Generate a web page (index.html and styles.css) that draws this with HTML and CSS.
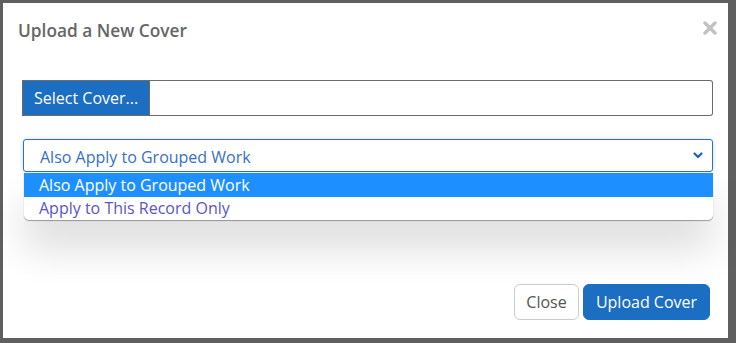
FILE: index.html
```html
<!DOCTYPE html>
<html>
<head>
<meta charset="utf-8">
<link rel="stylesheet" href="styles.css">
</head>
<body>
<div class="modal">
  <div class="modal-header">
    <h4 class="modal-title">Upload a New Cover</h4>
    <svg class="close" width="14" height="14" viewBox="0 0 14 14" aria-label="Close"><path d="M2 2 L12 12 M12 2 L2 12" stroke="#c2c2c2" stroke-width="3.4" stroke-linecap="round"/></svg>
  </div>
  <div class="modal-body">
    <div class="file-group">
      <span class="file-btn">Select Cover...</span>
      <span class="file-name"></span>
    </div>
    <div class="select-wrap">
      <div class="select">
        <span class="select-text">Also Apply to Grouped Work</span>
        <svg class="chevron" width="10" height="7" viewBox="0 0 10 7"><polyline points="1.5,1.5 5,5 8.5,1.5" fill="none" stroke="#1b63c6" stroke-width="2.2" stroke-linecap="round" stroke-linejoin="round"/></svg>
      </div>
      <div class="dropdown">
        <div class="option selected">Also Apply to Grouped Work</div>
        <div class="option">Apply to This Record Only</div>
      </div>
    </div>
  </div>
  <div class="modal-footer">
    <span class="btn btn-default">Close</span>
    <span class="btn btn-primary">Upload Cover</span>
  </div>
</div>
</body>
</html>
```
FILE: styles.css
```css
html, body {
  margin: 0;
  padding: 0;
}
body {
  width: 736px;
  height: 343px;
  background: #5f5f5f;
  font-family: "Open Sans", "Noto Sans", sans-serif;
  overflow: hidden;
  padding: 3px 0 0 3px;
  box-sizing: border-box;
}
.modal {
  width: 725px;
  height: 335px;
  background: #fff;
  display: flex;
  flex-direction: column;
  box-sizing: border-box;
}
.modal-header {
  display: flex;
  justify-content: space-between;
  align-items: flex-start;
  padding: 15px 11px 0 15px;
  height: 53px;
  box-sizing: border-box;
}
.modal-title {
  margin: 0;
  font-size: 17.3px;
  font-weight: 600;
  line-height: 26px;
  color: #666;
}
.close {
  display: block;
  margin-top: 3px;
}
.modal-body {
  padding: 24px 15px 0 19px;
  height: 209px;
  box-sizing: border-box;
}
.file-group {
  display: flex;
  height: 36px;
}
.file-btn {
  background: #1b6ec2;
  color: #fff;
  border: 1px solid #6b6b6b;
  font-size: 16px;
  line-height: 34px;
  padding: 0 11px;
  width: 128px;
  box-sizing: border-box;
  white-space: nowrap;
}
.file-name {
  flex: 1;
  border: 1px solid #6b6b6b;
  border-left: none;
  border-radius: 0 3px 3px 0;
}
.select-wrap {
  position: relative;
  margin: 23px 0 0 1px;
}
.select {
  height: 33px;
  box-sizing: border-box;
  border: 1px solid #2f6fc4;
  border-radius: 3px;
  display: flex;
  align-items: center;
  justify-content: space-between;
  padding: 0 9px 0 16px;
  box-shadow: 0 0 4px rgba(60, 120, 210, 0.25);
}
.select-text {
  font-size: 16px;
  color: #3571c4;
  line-height: 20px;
  margin-top: 3px;
}
.chevron {
  display: block;
}
.dropdown {
  position: absolute;
  top: 34px;
  left: 1px;
  right: 0;
  background: #fff;
  border-radius: 0 0 5px 5px;
  box-shadow: 0 1px 1px rgba(0,0,0,0.35), 0 28px 40px rgba(0, 0, 0, 0.14);
  overflow: hidden;
}
.option {
  height: 23px;
  line-height: 23px;
  padding-left: 15px;
  font-size: 16px;
  color: #5a55c8;
}
.option.selected {
  height: 24px;
  line-height: 24px;
  background: #1e8fff;
  color: #fff;
}
.modal-footer {
  display: flex;
  justify-content: flex-end;
  gap: 4px;
  padding: 19px 18px 0 0;
}
.btn {
  display: inline-block;
  height: 36px;
  line-height: 34px;
  box-sizing: border-box;
  font-size: 16px;
  border-radius: 6px;
  border: 1px solid transparent;
  text-align: center;
}
.btn-default {
  width: 65px;
  color: #555;
  border-color: #ccc;
  background: #fff;
}
.btn-primary {
  width: 127px;
  color: #fff;
  background: #1b6ec2;
  border-color: #1b6ec2;
}
```
